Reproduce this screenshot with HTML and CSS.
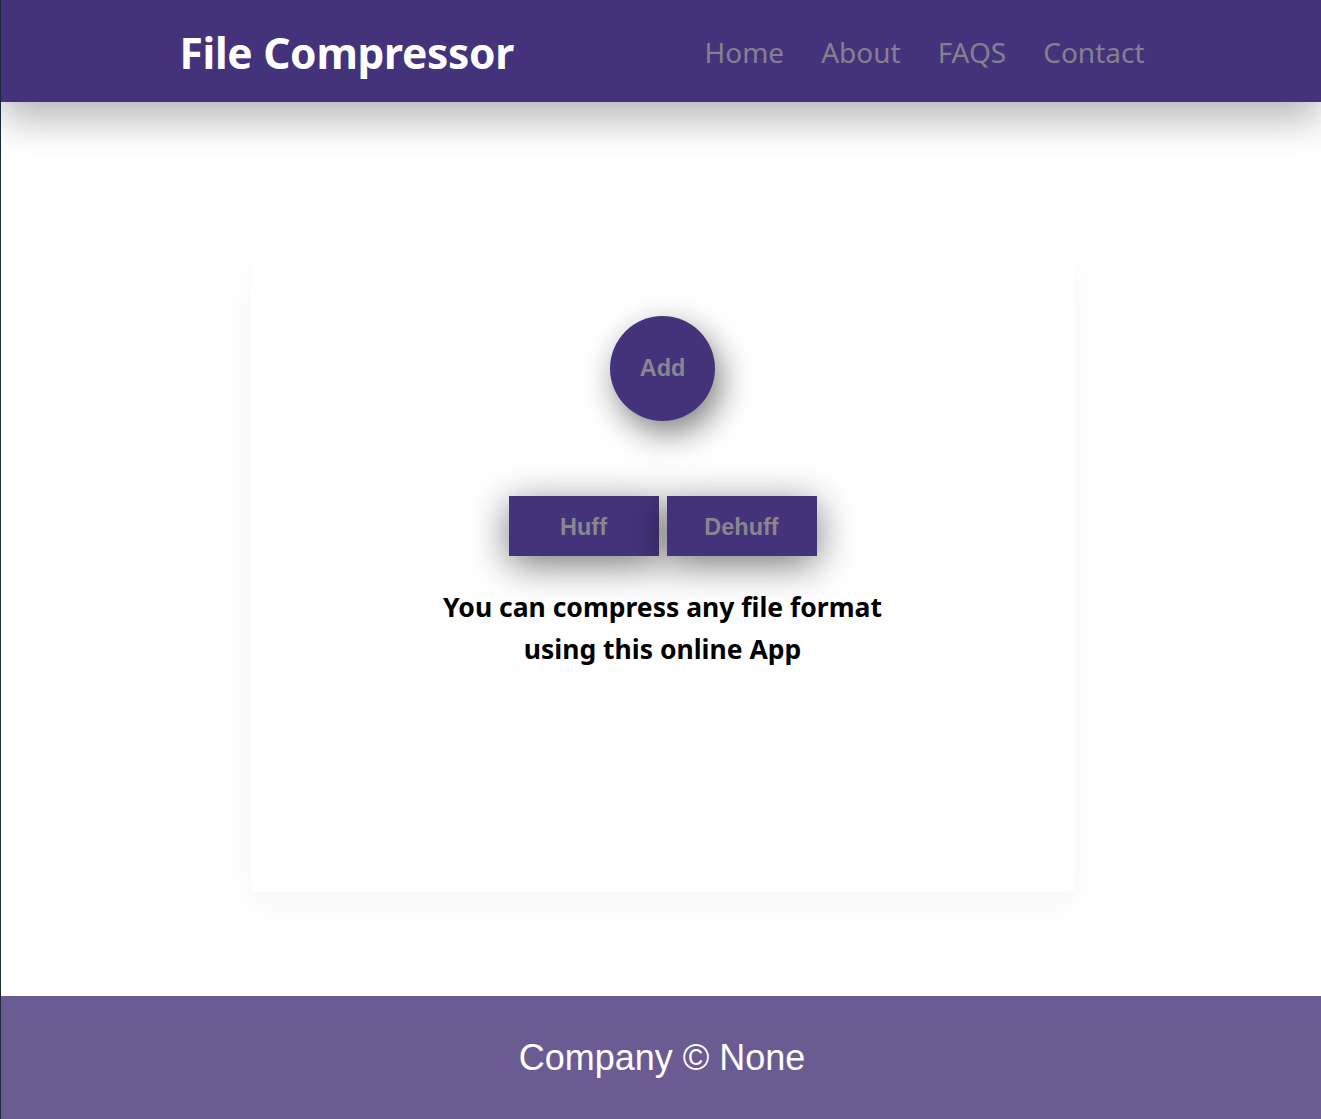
FILE: index.html
```html
<!DOCTYPE html>
<html>
<head>
<meta charset="utf-8">
<title>File Compressor</title>
<link rel="stylesheet" href="styles.css">
</head>
<body>
<header class="topbar">
  <div class="topbar-inner">
    <h1 class="brand">File Compressor</h1>
    <nav class="nav">
      <a href="#">Home</a>
      <a href="#">About</a>
      <a href="#">FAQS</a>
      <a href="#">Contact</a>
    </nav>
  </div>
</header>
<main class="main">
  <section class="card">
    <button class="add-btn">Add</button>
    <div class="actions">
      <button class="act-btn">Huff</button>
      <button class="act-btn">Dehuff</button>
    </div>
    <p class="tagline">You can compress any file format<br>using this online App</p>
  </section>
</main>
<footer class="footer">
  <p>Company © None</p>
</footer>
</body>
</html>
```
FILE: styles.css
```css
html, body {
  margin: 0;
  padding: 0;
  background: #ffffff;
}
body {
  font-family: "Noto Sans", "Open Sans", sans-serif;
  border-left: 1px solid #1a2a3a;
}
.topbar {
  background: #44337a;
  height: 102px;
  box-shadow: 0 16px 40px rgba(0,0,0,0.3);
  position: relative;
  z-index: 2;
}
.topbar-inner {
  width: 967px;
  margin: 0 auto;
  height: 100%;
  display: flex;
  align-items: center;
  justify-content: space-between;
  padding-left: 2px;
  box-sizing: border-box;
}
.brand {
  margin: 0;
  color: #ffffff;
  font-size: 42.5px;
  font-weight: 700;
  letter-spacing: -0.3px;
  padding-top: 2px;
}
.nav {
  display: flex;
  gap: 37px;
  padding-top: 2px;
}
.nav a {
  color: #858090;
  text-decoration: none;
  font-size: 28px;
  font-weight: 400;
}
.main {
  height: 894px;
  display: flex;
  justify-content: center;
  align-items: flex-start;
  padding-left: 3px;
}
.card {
  margin-top: 153px;
  width: 824px;
  height: 637px;
  background: #fff;
  box-shadow: 0 12px 40px rgba(0,0,0,0.04);
  display: flex;
  flex-direction: column;
  align-items: center;
  padding-top: 61px;
  box-sizing: border-box;
}
.add-btn {
  width: 105px;
  height: 105px;
  border-radius: 50%;
  border: none;
  background: #44337a;
  color: #8a8590;
  font-family: "Liberation Sans", Arial, sans-serif;
  font-weight: 700;
  font-size: 23.5px;
  box-shadow: 6px 12px 32px rgba(0,0,0,0.5);
  padding: 0;
}
.actions {
  display: flex;
  gap: 8px;
  margin-top: 75px;
}
.act-btn {
  width: 150px;
  height: 60px;
  border: none;
  background: #44337a;
  color: #8a8590;
  font-family: "Liberation Sans", Arial, sans-serif;
  font-weight: 700;
  font-size: 23.5px;
  box-shadow: 0 8px 38px rgba(0,0,0,0.55);
  padding: 2px 0 0;
}
.tagline {
  margin: 30px 0 0;
  text-align: center;
  font-size: 26.5px;
  font-weight: 700;
  line-height: 42px;
  color: #000;
}
.footer {
  background: #6a5b93;
  height: 123px;
  display: flex;
  align-items: center;
  justify-content: center;
}
.footer p {
  margin: 0;
  color: #ffffff;
  font-family: "Liberation Sans", Arial, sans-serif;
  font-size: 36px;
  padding-left: 2px;
}
```
